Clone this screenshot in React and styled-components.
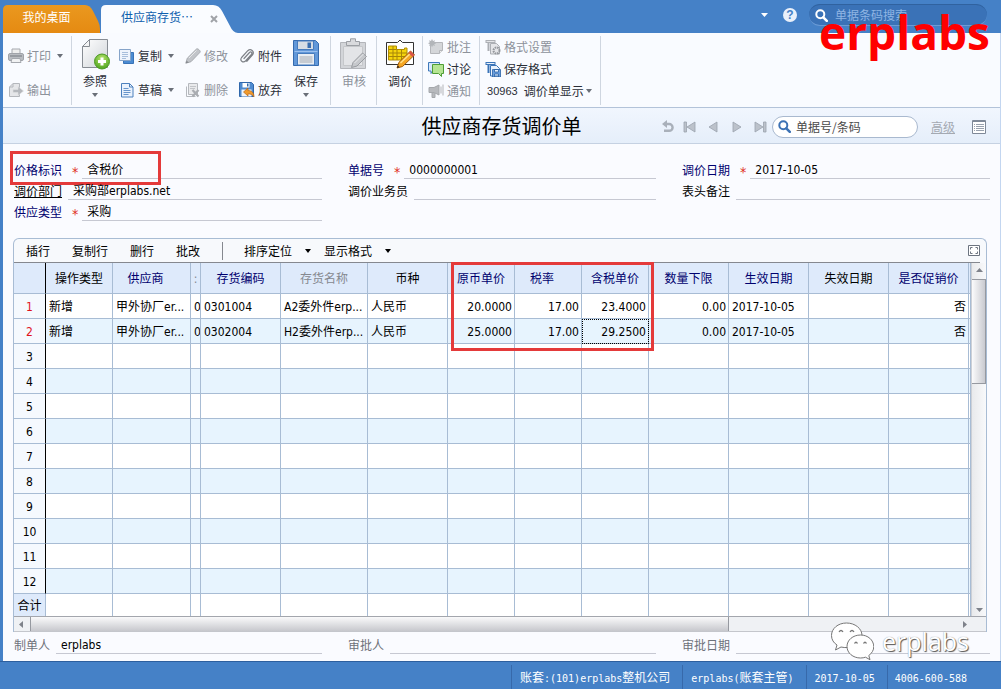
import React from "react";
import styled, { createGlobalStyle, css } from "styled-components";

const UI = `"DejaVu Sans Condensed", "Noto Sans CJK SC", sans-serif`;
const CJK = `"Noto Sans CJK SC", sans-serif`;
const BLUE = "#4581c7";
const LINE = "#a8bcd4";
const NAVY = "#00006e";

const GlobalStyle = createGlobalStyle`
  * { box-sizing: border-box; }
  body { margin: 0; background: ${BLUE}; color: #000; font: 12px/18px ${UI}; }
  button, input { font: inherit; color: inherit; }
  button { background: none; border: 0; padding: 0; }
  svg { display: block; flex: none; }
`;

const Page = styled.div`
  position: relative;
  display: flex;
  flex-direction: column;
  min-height: 100vh;
  overflow: hidden;
`;

/* ---- top bar ---- */
const TopBar = styled.header`
  display: flex;
  align-items: flex-end;
  height: 33px;
  padding-left: 3px;
`;
const HomeTab = styled.button`
  width: 97px;
  height: 28px;
  padding: 0 10px 4px 0;
  color: #fff;
  font-family: ${CJK};
  background: linear-gradient(#ea981f, #e58a12);
  clip-path: path("M0 28V5Q0 0 5 0H82Q87 0 90 6L95 16Q97 20 97 24V28Z");
`;
const ActiveTab = styled.div`
  display: flex;
  align-items: center;
  width: 137px;
  height: 28px;
  margin-left: 1px;
  padding: 0 0 4px 20px;
  color: #0f5fae;
  font-family: ${CJK};
  background: #fafcff;
  clip-path: path("M0 28V5Q0 0 5 0H112Q118 0 121 6L129 21Q132 28 137 28Z");
`;
const CloseTab = styled.button`
  margin: 3px 0 0 17px;
`;
const TopTools = styled.div`
  display: flex;
  align-items: center;
  align-self: flex-start;
  height: 30px;
  margin-left: auto;
  padding-right: 14px;
`;
const HelpButton = styled.button`
  width: 14px;
  height: 14px;
  margin: 0 12px 0 15px;
  border-radius: 50%;
  background: #e9f0fa;
  color: ${BLUE};
  font: bold 12px/14px "Liberation Sans", sans-serif;
`;
const SearchPill = styled.label`
  display: flex;
  align-items: center;
  gap: 5px;
  height: 22px;
  border-radius: 11px;
  ${(p) =>
    p.$dark
      ? css`
          width: 178px;
          padding-left: 6px;
          gap: 7px;
          color: #8fb5e4;
          background: #3a72b7;
          border-top: 1px solid #30629f;
          border-bottom: 1px solid #6a9bd6;
        `
      : css`
          width: 146px;
          padding-left: 5px;
          color: #4a4a4a;
          background: #fff;
          border: 1px solid #a9b9cf;
        `}
`;
const SearchInput = styled.input`
  flex: 1;
  min-width: 0;
  height: 18px;
  padding: 0;
  border: 0;
  outline: 0;
  background: none;
  font-family: ${CJK};
  &::placeholder { color: inherit; opacity: 1; }
`;

/* ---- workspace ---- */
const Workspace = styled.main`
  flex: 1;
  margin-left: 3px;
  background: #fafbff;
  border-right: 1px solid #c3d6f0;
`;
const Ribbon = styled.div`
  display: flex;
  height: 75px;
  background: #f9fbff;
  border-bottom: 1px solid #b3c3d9;
`;
const groupPadding = { small: "0 3px 0 0", big: "0 4px 0 5px", wide: "0 6px 0 5px" };
const Group = styled.div`
  display: flex;
  gap: 1px;
  height: 69px;
  margin-top: 3px;
  padding: ${(p) => groupPadding[p.$kind || "small"]};
  border-right: 1px solid #cfd6e0;
`;
const Stack = styled.div`
  display: grid;
  grid-auto-rows: ${(p) => (p.$rows === 3 ? 22 : 34)}px;
  align-content: start;
  margin: ${(p) => (p.$rows === 3 ? 0 : 3)}px 5px 0;
`;
const RibbonButton = styled.button`
  display: flex;
  align-items: center;
  gap: 3px;
  font-family: ${CJK};
  color: ${(p) => (p.disabled ? "#8d929b" : "#2b2f38")};
`;
const FormatPicker = styled(RibbonButton)`
  padding-left: 2px;
  gap: 2px;
`;
const FormatCode = styled.span`
  margin-right: 4px;
  font: 11px/18px "Liberation Sans", sans-serif;
`;
const BigButton = styled.button`
  display: flex;
  flex-direction: column;
  align-items: center;
  width: 36px;
  padding-top: 2px;
  font-family: ${CJK};
  color: ${(p) => (p.disabled ? "#8d929b" : "#2b2f38")};
`;
const BigLabel = styled.span`
  margin: 2px 0 3px;
`;
const CaretBox = styled.span`
  margin-left: 3px;
`;

/* ---- title strip ---- */
const TitleStrip = styled.div`
  display: grid;
  grid-template-columns: 1fr auto 1fr;
  align-items: center;
  height: 36px;
  background: linear-gradient(#f1f6fe, #e5eefa);
  border-bottom: 1px solid #c5d1e2;
`;
const Title = styled.h1`
  grid-column: 2;
  margin: 0;
  font: 400 20px/30px ${CJK};
`;
const Pager = styled.div`
  display: flex;
  align-items: center;
  justify-content: flex-end;
  padding: 2px 14px 0 0;
`;
const PagerButton = styled.button`
  width: 14px;
  margin-right: ${(p) => p.$gap}px;
`;
const Advanced = styled.a`
  margin: 0 17px 0 13px;
  color: #a4a9b2;
  font-family: ${CJK};
`;

/* ---- fields ---- */
const FieldGrid = styled.div`
  display: grid;
  grid-template-columns: repeat(3, minmax(0, 1fr));
  grid-auto-rows: 21px;
  column-gap: 26px;
  padding: ${(p) => (p.$foot ? "1px 10px 7px 11px" : "14px 10px 17px 11px")};
`;
const Field = styled.div`
  position: relative;
  display: flex;
  align-items: flex-end;
  grid-column: ${(p) => p.$col};
`;
const tones = { req: NAVY, plain: "#000", muted: "#6e727a" };
const FieldLabel = styled.label`
  height: 18px;
  margin-right: 6px;
  font-family: ${CJK};
  color: ${(p) => tones[p.$tone]};
  text-decoration: ${(p) => (p.$link ? "underline" : "none")};
`;
const Star = styled.span`
  height: 18px;
  margin: 0 4px;
  color: #e02b20;
  font: 14px/22px "DejaVu Sans Condensed", sans-serif;
`;
const FieldInput = styled.input`
  flex: 1;
  min-width: 0;
  height: 18px;
  padding: 0 0 0 5px;
  border: 0;
  border-bottom: 1px solid #c6c8d2;
  outline: 0;
  background: none;
`;
const FieldMark = styled.span`
  position: absolute;
  left: -4px;
  top: -7px;
  width: 151px;
  height: 34px;
  border: 3px solid #e43a3a;
`;

/* ---- grid panel ---- */
const Panel = styled.section`
  margin: 0 13px 0 10px;
  border: 1px solid ${LINE};
  border-bottom: 0;
  border-radius: 6px 6px 0 0;
  background: #f7f9fc;
`;
const PanelBar = styled.div`
  display: flex;
  align-items: center;
  height: 24px;
  margin-right: 6px;
  padding-left: 12px;
  border-bottom: 1px solid #85888f;
`;
const PanelButton = styled.button`
  display: flex;
  align-items: center;
  gap: 13px;
  margin-right: ${(p) => (p.$menu ? 13 : 22)}px;
  font-family: ${CJK};
`;
const PanelRule = styled.span`
  width: 1px;
  height: 18px;
  margin-right: 21px;
  background: #85888f;
`;
const ExpandButton = styled.button`
  margin-left: auto;
`;
const PanelBody = styled.div`
  position: relative;
  display: grid;
  grid-template-columns: minmax(0, 1fr) 15px;
`;
const Table = styled.table`
  width: 100%;
  table-layout: fixed;
  border-collapse: separate;
  border-spacing: 0;
`;
const HeadCell = styled.th`
  height: 31px;
  padding: 2px ${(p) => (p.$marker ? 12 : 0)}px 0 0;
  overflow: hidden;
  white-space: nowrap;
  font-weight: 400;
  color: ${(p) => p.$color};
  background: #deeafb;
  border-right: 1px solid ${(p) => (p.$first ? "#000" : LINE)};
  border-bottom: 1px solid ${LINE};
`;
const RowHead = styled.th`
  height: ${(p) => (p.$total ? 22 : 25)}px;
  padding: 2px ${(p) => (p.$total ? 2 : 0)}px 0;
  font-weight: 400;
  white-space: nowrap;
  color: ${(p) => (p.$used ? "#e0141c" : "#000")};
  background: ${(p) => (p.$total ? "#deeafb" : "#f5f9fe")};
  border-right: 1px solid ${(p) => (p.$total ? LINE : "#000")};
  border-bottom: ${(p) => (p.$total ? "0" : `1px solid ${LINE}`)};
`;
const Cell = styled.td`
  padding: 2px 2px 0 3px;
  overflow: hidden;
  white-space: nowrap;
  text-align: ${(p) => (p.$num ? "right" : "left")};
  background: ${(p) => (p.$even ? "#e7f4fe" : "#fff")};
  border-right: 1px solid ${LINE};
  border-bottom: ${(p) => (p.$total ? "0" : `1px solid ${LINE}`)};
  ${(p) => p.$focus && "outline: 1px dotted #000; outline-offset: -1px;"}
`;
const TableMark = styled.span`
  position: absolute;
  left: calc(100% * 437 / 972);
  top: -1px;
  width: calc(100% * 203 / 972);
  height: 89px;
  border: 3px solid #e43a3a;
`;
const VScroll = styled.div`
  display: flex;
  flex-direction: column;
  background: linear-gradient(90deg, #e9eaec, #f8f9fb);
  border-left: 1px solid #cdd0d6;
`;
const HScroll = styled.div`
  grid-column: 1 / -1;
  display: flex;
  height: 16px;
  padding-right: 15px;
  background: #eff1f4;
  border-top: 1px solid #a3a6ad;
  border-bottom: 1px solid #c4c6cc;
`;
const ScrollArrow = styled.button`
  display: flex;
  align-items: center;
  justify-content: center;
  width: 14px;
  height: 14px;
  margin-${(p) => p.$push || "right"}: ${(p) => (p.$push ? "auto" : 0)};
`;
const ThumbV = styled.div`
  height: 105px;
  margin-top: 2px;
  border: 1px solid #9699a0;
  border-left: 0;
  background: linear-gradient(90deg, #fbfbfc, #c9cad0);
`;
const ThumbH = styled.div`
  width: 73%;
  margin-left: 2px;
  border: 1px solid #9699a0;
  border-width: 0 1px;
  background: linear-gradient(#fafafb, #c7c8cd);
`;

/* ---- status bar ---- */
const StatusBar = styled.footer`
  display: flex;
  justify-content: flex-end;
  height: 28px;
  padding: 3px 27px 0 0;
  color: #fff;
  border-top: 1px solid #2d5f9e;
`;
const StatusItem = styled.span`
  padding: 3px ${(p) => (p.$wide ? 12 : 7)}px 0 ${(p) => (p.$wide ? 8 : 7)}px;
  border-left: 1px solid #3769aa;
  font-family: ${CJK};
`;
const Mono = styled.span`
  font-family: "DejaVu Sans Mono", monospace;
  font-size: 10px;
`;

/* ---- overlaid marks ---- */
const RedMark = styled.span`
  position: absolute;
  top: 9px;
  right: 11px;
  color: #ff0000;
  font: 700 46px/46px "Open Sans", sans-serif;
  pointer-events: none;
`;
const Watermark = styled.span`
  position: absolute;
  right: 32px;
  bottom: 28px;
  display: flex;
  align-items: center;
  gap: 8px;
  color: #fff;
  font: 25px/40px "Open Sans", sans-serif;
  text-shadow: 1px 1px 1px #555, 0 0 1px #888;
  pointer-events: none;
`;

/* ---- icons ---- */
const Svg = ({ w = 16, h = 16, children, ...rest }) => (
  <svg width={w} height={h} viewBox={`0 0 ${w} ${h}`} fill="none" aria-hidden="true" {...rest}>
    {children}
  </svg>
);
const Caret = ({ color = "#6a6f78" }) => (
  <Svg w={6} h={4}><path d="M0 0h6L3 4z" fill={color} /></Svg>
);
const SearchIcon = ({ color }) => (
  <Svg w={13} h={13}>
    <circle cx="5.3" cy="5.3" r="4" stroke={color} strokeWidth="2" />
    <path d="m8.3 8.3 3.5 3.5" stroke={color} strokeWidth="2.6" strokeLinecap="round" />
  </Svg>
);
const PrintIcon = () => (
  <Svg>
    <path d="M4 6V1h8v5" fill="#eee" stroke="#a5a8ae" />
    <rect x=".5" y="5.5" width="15" height="7" rx="1.5" fill="#b9bcc1" stroke="#a0a3a9" />
    <path d="M2 8h12" stroke="#8c9096" strokeWidth="1.5" />
    <path d="M4 10.5h8l1 4H3z" fill="#f1f2f3" stroke="#a5a8ae" />
  </Svg>
);
const ExportIcon = () => (
  <Svg>
    <path d="M1.500 5 5 1.500h6.500v13h-10z" fill="#e5e6e9" stroke="#b4b7bc" />
    <path d="M5 1.500V5H1.500" stroke="#b4b7bc" />
    <path d="M5 7.500h5V4.500l5.500 4.500-5.500 4.500v-3H5z" fill="#b5b8bd" stroke="#dfe0e2" strokeWidth=".6" />
  </Svg>
);
const RefIcon = () => (
  <Svg w={30} h={32}>
    <defs>
      <linearGradient id="paper" x1="0" y1="0" x2="1" y2="1"><stop stopColor="#fff" /><stop offset="1" stopColor="#cfd3d8" /></linearGradient>
      <radialGradient id="plus" cx=".5" cy=".3" r=".7"><stop stopColor="#b4e26a" /><stop offset="1" stopColor="#4fa51f" /></radialGradient>
    </defs>
    <path d="M2.500 8.500 9.500 1.500h18v28h-25z" fill="url(#paper)" stroke="#878c93" />
    <path d="M9.500 1.500v7h-7z" fill="#f4f5f6" stroke="#878c93" />
    <circle cx="22" cy="23.500" r="7.500" fill="url(#plus)" stroke="#4c9a22" />
    <path d="M22 19.500v8M18 23.500h8" stroke="#fff" strokeWidth="3" />
  </Svg>
);
const CopyIcon = () => (
  <Svg>
    <path d="M4.500 4.500h10v11h-10z" fill="#4b8bd2" stroke="#3973b7" />
    <path d="M.5 1.500h11v11H.5z" fill="#eef4fc" stroke="#86a4c9" />
    <path d="M3 4.500h6M3 6.500h6M3 8.500h6M3 10.500h4" stroke="#a7bedb" />
  </Svg>
);
const DraftIcon = () => (
  <Svg>
    <path d="M2.500 1.500h8l3.500 3.500v10h-11.500z" fill="#eaf2fd" stroke="#4d80bd" />
    <path d="M10.500 1.500v3.500h3.500" stroke="#4d80bd" />
    <path d="M4.500 6.500h5M4.500 8.500h7M4.500 10.500h7M4.500 12.500h5" stroke="#6895cb" />
  </Svg>
);
const PencilIcon = () => (
  <Svg>
    <path d="m.8 15.200 1.500-5L11.500 1c1.200-1 4.500 2 3.500 3.300L6 13.700z" fill="#c1c4c9" stroke="#a8abb0" />
    <path d="m4 10 7.500-7.500" stroke="#e7e8ea" /><path d="m.8 15.200.8-2.500 2.200 1.700z" fill="#85888d" />
  </Svg>
);
const DeleteIcon = () => (
  <Svg>
    <path d="M1.500 4.500v10h9" stroke="#b5b8bd" />
    <path d="M3.500 1.500h9v11h-9z" fill="#e9eaec" stroke="#b5b8bd" />
    <path d="M5 4.500h6M5 6.500h5" stroke="#c2c4c8" />
    <path d="m7.500 8 6 6.500m0-6.500-6 6.500" stroke="#a9acb1" strokeWidth="2.200" />
  </Svg>
);
const ClipIcon = () => (
  <Svg>
    <path d="m5 10.500 5.500-6c1.500-1.400 3.200.200 1.900 1.800L6.500 13C4 15.300.4 12.500 2.600 9.500L8.800 2.700c2.800-2.700 7.200.600 4.700 4.300L7.800 13.300" stroke="#7d8187" strokeWidth="1.200" strokeLinecap="round" />
  </Svg>
);
const DiscardIcon = () => (
  <Svg>
    <path d="M.5.5h12l2 2v12H.5z" fill="#4f8bd0" stroke="#2f67ab" />
    <path d="M3.500 1h7v4.500h-7z" fill="#fff" /><path d="M8 1.500h1.500v3H8z" fill="#2f67ab" />
    <path d="M2.500 7.500h10v7h-10z" fill="#f1f5fa" />
    <path d="m4.500 10 4.500-4v2.500c4 0 6 2.500 6 6.500-1.500-2-3-3.200-6-3.200V14z" fill="#f09a2c" stroke="#b96412" strokeWidth=".7" />
  </Svg>
);
const SaveIcon = () => (
  <Svg w={28} h={32}>
    <path d="M1.500 2.500h22l3 3v22h-25z" fill="#6298d9" stroke="#356aae" />
    <path d="M5.500 3h16v8.500h-16z" fill="#d7dde5" stroke="#467bbd" />
    <path d="M15.500 4.500H19V10h-3.500z" fill="#3a6eaf" />
    <path d="M5.500 15.500h17V27h-17z" fill="#e8edf3" stroke="#467bbd" />
    <path d="M7.500 18h13v7h-13z" fill="#c6cbd2" /><path d="M2.500 13.500h23" stroke="#9bc0ee" />
  </Svg>
);
const AuditIcon = () => (
  <Svg w={30} h={32}>
    <path d="M1.500 4.500h25v26h-25z" fill="#d3d5d9" stroke="#b3b5ba" />
    <path d="M4.500 8.500h19v19h-19z" fill="#e3e4e7" stroke="#c5c7ca" />
    <path d="M7.500 7.500v-4h4V.800h5v2.700h4v4z" fill="#d9dadd" stroke="#9c9fa4" />
    <path d="m12.500 29.500 1.500-5 9.500-9.500 4 3.500L18 28z" fill="#c6c8cc" stroke="#999ca1" />
    <path d="m15.500 25 9-9" stroke="#e9eaec" />
  </Svg>
);
const PriceIcon = () => (
  <Svg w={30} h={32}>
    <path d="M1.500 4.500h11L15 2l2.500 2.500h11v22h-27z" fill="#fff" stroke="#333" />
    <path d="M3.500 8h8v3.500h8V10H22v12H3.500z" fill="#f5d40c" stroke="#b08c05" />
    <path d="M3.500 11.500h8m-8 3.500H22M3.500 18.500H22M8 8v14M12 11.500V22M16.500 11.500V22" stroke="#a78608" />
    <path d="m12 30 1.800-5.500L25.500 13l4 4L17.500 28.500z" fill="#f5a623" stroke="#a25d0c" />
    <path d="m15.500 25 10.500-10" stroke="#ffe18a" strokeWidth="1.500" />
    <path d="m23.500 15 2-2 4 4-2 2z" fill="#d9534a" /><path d="m12 30 .8-2.500 1.700 1.700z" fill="#222" />
  </Svg>
);
const NoteIcon = () => (
  <Svg>
    <path d="M2.500 3.500h12v8l-3 3h-9z" fill="#d4d6d9" stroke="#b4b6ba" />
    <path d="M14.500 11.500h-3v3" fill="#eee" stroke="#b4b6ba" />
    <path d="m4 0 1 2 2-.8L6.200 3.200l2 1-2 1L7 7l-2-.8L4 8.200l-1-2L1 7l.8-1.800-1.800-1 1.800-1L1 1.200 3 2z" fill="#b2b5b9" />
  </Svg>
);
const ChatIcon = () => (
  <Svg>
    <path d="M.5 1.500h11v8.500H5l-2 2.500V10H.5z" fill="#d4e6fa" stroke="#3e78ba" />
    <path d="M4.500 3.500h11v9h-2v3l-3-3h-6z" fill="#b5e493" stroke="#4e9d35" />
  </Svg>
);
const HornIcon = () => (
  <Svg>
    <path d="M1 4.500h5L11 2v10L6 9.500H1z" fill="#b8babe" stroke="#a5a8ac" />
    <path d="M4 10v4.500h3V10" fill="#b8babe" stroke="#a5a8ac" />
    <path d="M13 3.500v7M15 1.500v11" stroke="#bfc1c5" strokeWidth="1.200" />
  </Svg>
);
const FormatIcon = ({ muted, save }) => {
  const s = muted ? "#acafb4" : "#3a74b8";
  const f = muted ? "#e4e5e8" : "#e8f1fc";
  return (
    <Svg>
      <path d="M.5 2.500h10" stroke={s} strokeWidth="3" />
      <path d="M1.500 2.500h8" stroke={f} />
      <path d="M5.500 4.500h6l3 3v7.500h-9z" fill={f} stroke={s} />
      <path d="M3.500 4v8" stroke={s} strokeWidth="2" />
      {save ? (
        <path d="M7.500 8.500h8V16h-8z M9.500 8.500h4v2.500h-4z M9.500 13h4v3h-4z" fill="#6ca0df" fillRule="evenodd" stroke="#2b62a5" strokeWidth=".8" />
      ) : (
        <circle cx="11.5" cy="11.5" r="3" fill={f} stroke="#94979c" strokeWidth="2" strokeDasharray="1.600 .800" />
      )}
    </Svg>
  );
};
const UndoIcon = () => (
  <Svg w={14} h={13}>
    <path d="M5 4h3.200a3.400 3.400 0 1 1 0 6.800H3" stroke="#a9b0ba" strokeWidth="2.400" />
    <path d="M6 0v8L1 4z" fill="#a9b0ba" />
  </Svg>
);
const StepIcon = ({ back, bar }) => (
  <Svg w={14} h={12} transform={back ? undefined : "scale(-1 1)"}>
    {bar && <path d="M1 1h2.500v10H1z" fill="#bcc2cb" stroke="#9aa2ad" strokeWidth=".8" />}
    <path d="M12 1v10L4 6z" fill="#bcc2cb" stroke="#9aa2ad" strokeWidth=".8" />
  </Svg>
);
const ListIcon = () => (
  <Svg w={14} h={14}>
    <path d="M.5.5h13v13H.5z" fill="#fff" stroke="#7f8998" /><path d="M1 1.500h12" stroke="#7f8998" />
    <path d="M2 4.500h1m1 0h8M2 6.500h1m1 0h8M2 8.500h1m1 0h8M2 10.500h1m1 0h8" stroke="#98a1ae" />
  </Svg>
);
const ExpandIcon = () => (
  <Svg w={12} h={11}>
    <path d="M.5.5h11v10H.5z" fill="#fff" stroke="#6c7480" />
    <path d="M2.500 4.500v-2h2m3 0h2v2m0 2v2h-2m-3 0h-2v-2" stroke="#6c7480" />
  </Svg>
);
const Arrow = ({ dir }) => {
  const d = { up: "M0 5h7L3.500 1z", down: "M0 2h7L3.500 6z", left: "M5 0v7L1 3.500z", right: "M2 0v7l4-3.500z" };
  return <Svg w={7} h={7}><path d={d[dir]} fill="#7e828a" /></Svg>;
};
const ChatMark = () => (
  <Svg w={44} h={40}>
    <g fill="#fff" stroke="#777" strokeWidth="1">
      <path d="M16.500 2C8 2 1.500 7.500 1.500 14.500c0 4 2 7.300 5.500 9.500l-1.500 5 5.500-3c8 2 21-1 21-11.500C32 7.500 25 2 16.500 2Z" />
      <path d="M30.500 14C23 14 17 19 17 25.500S23 37 30.500 37c2 0 3.500-.3 5-.8l4.500 2.500-1.200-4.200c3-2.200 5-5.300 5-9C43.500 19 38 14 30.500 14Z" />
    </g>
    <g stroke="#777" strokeWidth="1.300">
      <path d="M9 11q2-3 4 0M20 11q2-3 4 0M24.500 22.500q1.500-2.500 3 0M33.500 22.500q1.500-2.500 3 0" />
    </g>
  </Svg>
);

/* ---- data ---- */
const columns = [
  { w: 67, t: "操作类型", c: "#000" },
  { w: 78, t: "供应商", c: NAVY, marker: true },
  { w: 10, t: ":", c: "#85888f" },
  { w: 80, t: "存货编码", c: NAVY },
  { w: 87, t: "存货名称", c: "#85888f" },
  { w: 80, t: "币种", c: "#000" },
  { w: 67, t: "原币单价", c: NAVY, num: true },
  { w: 67, t: "税率", c: NAVY, num: true, marker: true },
  { w: 67, t: "含税单价", c: NAVY, num: true },
  { w: 80, t: "数量下限", c: NAVY, num: true },
  { w: 80, t: "生效日期", c: NAVY },
  { w: 80, t: "失效日期", c: "#000" },
  { w: 80, t: "是否促销价", c: NAVY, num: true },
];
const records = [
  ["新增", "甲外协厂er...", "0", "0301004", "A2委外件erp...", "人民币", "20.0000", "17.00", "23.4000", "0.00", "2017-10-05", "", "否"],
  ["新增", "甲外协厂er...", "0", "0302004", "H2委外件erp...", "人民币", "25.0000", "17.00", "29.2500", "0.00", "2017-10-05", "", "否"],
];
const rows = Array.from({ length: 12 }, (_, i) => records[i] || []);

const Tool = ({ icon, label, menu, disabled }) => (
  <RibbonButton disabled={disabled}>
    {icon}
    {label}
    {menu && <CaretBox><Caret /></CaretBox>}
  </RibbonButton>
);
const BigTool = ({ icon, label, menu, disabled }) => (
  <BigButton disabled={disabled}>
    {icon}
    <BigLabel>{label}</BigLabel>
    {menu && <Caret />}
  </BigButton>
);
const FormField = ({ id, label, value = "", tone = "plain", link, col, marked }) => (
  <Field $col={col}>
    <FieldLabel htmlFor={id} $tone={tone} $link={link}>{label}</FieldLabel>
    {tone === "req" && <Star>*</Star>}
    <FieldInput id={id} defaultValue={value} />
    {marked && <FieldMark />}
  </Field>
);

export default function App() {
  return (
    <Page>
      <GlobalStyle />
      <TopBar>
        <HomeTab>我的桌面</HomeTab>
        <ActiveTab>
          供应商存货⋯
          <CloseTab aria-label="关闭">
            <Svg w={8} h={8}><path d="m1 1 6 6m0-6-6 6" stroke="#a0a3a8" strokeWidth="2" /></Svg>
          </CloseTab>
        </ActiveTab>
        <TopTools>
          <Svg w={7} h={4}><path d="M0 0h7L3.500 4z" fill="#fff" /></Svg>
          <HelpButton aria-label="帮助">?</HelpButton>
          <SearchPill $dark>
            <SearchIcon color="#fff" />
            <SearchInput placeholder="单据条码搜索" aria-label="单据条码搜索" />
          </SearchPill>
        </TopTools>
      </TopBar>

      <Workspace>
        <Ribbon>
          <Group>
            <Stack>
              <Tool icon={<PrintIcon />} label="打印" menu disabled />
              <Tool icon={<ExportIcon />} label="输出" disabled />
            </Stack>
          </Group>
          <Group $kind="wide">
            <BigTool icon={<RefIcon />} label="参照" menu />
            <Stack>
              <Tool icon={<CopyIcon />} label="复制" menu />
              <Tool icon={<DraftIcon />} label="草稿" menu />
            </Stack>
            <Stack>
              <Tool icon={<PencilIcon />} label="修改" disabled />
              <Tool icon={<DeleteIcon />} label="删除" disabled />
            </Stack>
            <Stack>
              <Tool icon={<ClipIcon />} label="附件" />
              <Tool icon={<DiscardIcon />} label="放弃" />
            </Stack>
            <BigTool icon={<SaveIcon />} label="保存" menu />
          </Group>
          <Group $kind="big"><BigTool icon={<AuditIcon />} label="审核" disabled /></Group>
          <Group $kind="big"><BigTool icon={<PriceIcon />} label="调价" /></Group>
          <Group>
            <Stack $rows={3}>
              <Tool icon={<NoteIcon />} label="批注" disabled />
              <Tool icon={<ChatIcon />} label="讨论" />
              <Tool icon={<HornIcon />} label="通知" disabled />
            </Stack>
          </Group>
          <Group>
            <Stack $rows={3}>
              <Tool icon={<FormatIcon muted />} label="格式设置" disabled />
              <Tool icon={<FormatIcon save />} label="保存格式" />
              <FormatPicker><FormatCode>30963</FormatCode>调价单显示<Caret /></FormatPicker>
            </Stack>
          </Group>
        </Ribbon>

        <TitleStrip>
          <Title>供应商存货调价单</Title>
          <Pager>
            <PagerButton $gap={8} aria-label="刷新"><UndoIcon /></PagerButton>
            <PagerButton $gap={8} aria-label="首张"><StepIcon back bar /></PagerButton>
            <PagerButton $gap={12} aria-label="上张"><StepIcon back /></PagerButton>
            <PagerButton $gap={8} aria-label="下张"><StepIcon /></PagerButton>
            <PagerButton $gap={5} aria-label="末张"><StepIcon bar /></PagerButton>
            <SearchPill>
              <SearchIcon color="#3d72b4" />
              <SearchInput placeholder="单据号/条码" aria-label="单据号/条码" />
            </SearchPill>
            <Advanced href="#advanced">高级</Advanced>
            <button aria-label="列表"><ListIcon /></button>
          </Pager>
        </TitleStrip>

        <FieldGrid>
          <FormField id="flag" label="价格标识" value="含税价" tone="req" col={1} marked />
          <FormField id="number" label="单据号" value="0000000001" tone="req" col={2} />
          <FormField id="date" label="调价日期" value="2017-10-05" tone="req" col={3} />
          <FormField id="dept" label="调价部门" value="采购部erplabs.net" link col={1} />
          <FormField id="clerk" label="调价业务员" col={2} />
          <FormField id="memo" label="表头备注" col={3} />
          <FormField id="kind" label="供应类型" value="采购" tone="req" col={1} />
        </FieldGrid>

        <Panel>
          <PanelBar>
            <PanelButton>插行</PanelButton>
            <PanelButton>复制行</PanelButton>
            <PanelButton>删行</PanelButton>
            <PanelButton>批改</PanelButton>
            <PanelRule />
            <PanelButton $menu>排序定位<Caret color="#000" /></PanelButton>
            <PanelButton $menu>显示格式<Caret color="#000" /></PanelButton>
            <ExpandButton aria-label="全屏"><ExpandIcon /></ExpandButton>
          </PanelBar>
          <PanelBody>
            <Table>
              <colgroup>
                <col width="32" />
                {columns.map((c) => <col key={c.t} width={c.w} />)}
                <col width="2" />
              </colgroup>
              <thead>
                <tr>
                  <HeadCell $first />
                  {columns.map((c) => (
                    <HeadCell key={c.t} $color={c.c} $marker={c.marker}>{c.t}</HeadCell>
                  ))}
                  <HeadCell />
                </tr>
              </thead>
              <tbody>
                {rows.map((r, i) => (
                  <tr key={i}>
                    <RowHead scope="row" $used={r.length > 0}>{i + 1}</RowHead>
                    {columns.map((c, j) => (
                      <Cell key={c.t} $num={c.num} $even={i % 2 === 1} $focus={i === 1 && j === 8}>{r[j]}</Cell>
                    ))}
                    <Cell $even={i % 2 === 1} />
                  </tr>
                ))}
              </tbody>
              <tfoot>
                <tr>
                  <RowHead scope="row" $total>合计</RowHead>
                  {columns.map((c) => <Cell key={c.t} $total />)}
                  <Cell $total />
                </tr>
              </tfoot>
            </Table>
            <VScroll>
              <ScrollArrow aria-label="向上"><Arrow dir="up" /></ScrollArrow>
              <ThumbV />
              <ScrollArrow $push="top" aria-label="向下"><Arrow dir="down" /></ScrollArrow>
            </VScroll>
            <HScroll>
              <ScrollArrow aria-label="向左"><Arrow dir="left" /></ScrollArrow>
              <ThumbH />
              <ScrollArrow $push="left" aria-label="向右"><Arrow dir="right" /></ScrollArrow>
            </HScroll>
            <TableMark />
          </PanelBody>
        </Panel>

        <FieldGrid $foot>
          <FormField id="maker" label="制单人" value="erplabs" tone="muted" col={1} />
          <FormField id="approver" label="审批人" tone="muted" col={2} />
          <FormField id="approved" label="审批日期" tone="muted" col={3} />
        </FieldGrid>
      </Workspace>

      <StatusBar>
        <StatusItem $wide>账套<Mono>:(101)erplabs</Mono>整机公司</StatusItem>
        <StatusItem $wide><Mono>erplabs(</Mono>账套主管<Mono>)</Mono></StatusItem>
        <StatusItem $wide><Mono>2017-10-05</Mono></StatusItem>
        <StatusItem><Mono>4006-600-588</Mono></StatusItem>
      </StatusBar>

      <RedMark>erplabs</RedMark>
      <Watermark><ChatMark />erplabs</Watermark>
    </Page>
  );
}
